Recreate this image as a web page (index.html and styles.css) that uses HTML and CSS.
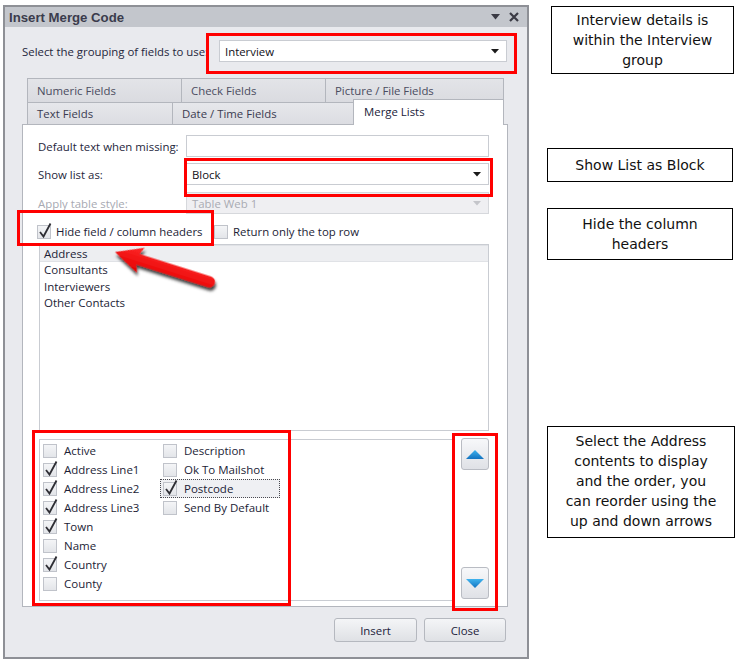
FILE: index.html
```html
<!DOCTYPE html>
<html>
<head>
<meta charset="utf-8">
<link rel="stylesheet" href="styles.css">
</head>
<body>
<div class="page">
  <div class="dialog">
    <div class="titlebar">
      <span class="title">Insert Merge Code</span>
      <span class="title-icons">
        <svg width="9" height="6" viewBox="0 0 9 6"><path d="M0 0H9L4.5 5.5Z" fill="#3a3a44"/></svg>
        <svg width="10" height="10" viewBox="0 0 10 10"><path d="M1 1L9 9M9 1L1 9" stroke="#3a3a44" stroke-width="2.2"/></svg>
      </span>
    </div>
    <div class="group-row">
      <span class="label">Select the grouping of fields to use:</span>
      <div class="combo group-combo"><span>Interview</span><svg class="drop" width="8" height="5" viewBox="0 0 8 5"><path d="M0 0H8L4 4.5Z" fill="#1a1a1a"/></svg></div>
    </div>
    <div class="tabs">
      <div class="tabrow row1">
        <div class="tab w-num">Numeric Fields</div>
        <div class="tab w-check">Check Fields</div>
        <div class="tab w-pic">Picture / File Fields</div>
      </div>
      <div class="tabrow row2">
        <div class="tab w-text">Text Fields</div>
        <div class="tab w-date">Date / Time Fields</div>
        <div class="tab active w-merge">Merge Lists</div>
      </div>
      <div class="panel">
        <div class="field-row">
          <span class="flabel">Default text when missing:</span>
          <div class="input"></div>
        </div>
        <div class="field-row r2">
          <span class="flabel">Show list as:</span>
          <div class="combo"><span>Block</span><svg class="drop" width="8" height="5" viewBox="0 0 8 5"><path d="M0 0H8L4 4.5Z" fill="#1a1a1a"/></svg></div>
        </div>
        <div class="field-row r3 disabled">
          <span class="flabel">Apply table style:</span>
          <div class="combo"><span>Table Web 1</span><svg class="drop" width="8" height="5" viewBox="0 0 8 5"><path d="M0 0H8L4 4.5Z" fill="#c4c5ca"/></svg></div>
        </div>
        <div class="check-row">
          <span class="cb on"><svg width="16" height="17" viewBox="0 0 16 17"><path d="M3 10L6.5 14.5L13.5 1.5" fill="none" stroke="#2e2e34" stroke-width="1.8"/></svg></span>
          <span class="cb-label hide-label">Hide field / column headers</span>
          <span class="cb"></span>
          <span class="cb-label">Return only the top row</span>
        </div>
        <div class="listbox">
          <div class="li sel">Address</div>
          <div class="li">Consultants</div>
          <div class="li">Interviewers</div>
          <div class="li">Other Contacts</div>
        </div>
        <div class="bottom">
          <div class="checklist">
            <div class="col c1">
              <div class="item"><span class="cb"></span><span>Active</span></div>
              <div class="item"><span class="cb on"><svg width="16" height="17" viewBox="0 0 16 17"><path d="M3 10L6.5 14.5L13.5 1.5" fill="none" stroke="#2e2e34" stroke-width="1.8"/></svg></span><span>Address Line1</span></div>
              <div class="item"><span class="cb on"><svg width="16" height="17" viewBox="0 0 16 17"><path d="M3 10L6.5 14.5L13.5 1.5" fill="none" stroke="#2e2e34" stroke-width="1.8"/></svg></span><span>Address Line2</span></div>
              <div class="item"><span class="cb on"><svg width="16" height="17" viewBox="0 0 16 17"><path d="M3 10L6.5 14.5L13.5 1.5" fill="none" stroke="#2e2e34" stroke-width="1.8"/></svg></span><span>Address Line3</span></div>
              <div class="item"><span class="cb on"><svg width="16" height="17" viewBox="0 0 16 17"><path d="M3 10L6.5 14.5L13.5 1.5" fill="none" stroke="#2e2e34" stroke-width="1.8"/></svg></span><span>Town</span></div>
              <div class="item"><span class="cb"></span><span>Name</span></div>
              <div class="item"><span class="cb on"><svg width="16" height="17" viewBox="0 0 16 17"><path d="M3 10L6.5 14.5L13.5 1.5" fill="none" stroke="#2e2e34" stroke-width="1.8"/></svg></span><span>Country</span></div>
              <div class="item"><span class="cb"></span><span>County</span></div>
            </div>
            <div class="col c2">
              <div class="item"><span class="cb"></span><span>Description</span></div>
              <div class="item"><span class="cb"></span><span>Ok To Mailshot</span></div>
              <div class="item focus"><span class="cb on"><svg width="16" height="17" viewBox="0 0 16 17"><path d="M3 10L6.5 14.5L13.5 1.5" fill="none" stroke="#2e2e34" stroke-width="1.8"/></svg></span><span>Postcode</span></div>
              <div class="item"><span class="cb"></span><span>Send By Default</span></div>
            </div>
          </div>
          <div class="movers">
            <div class="mbtn"><svg width="18" height="9" viewBox="0 0 18 9"><defs><linearGradient id="gu" x1="0" y1="0" x2="0" y2="1"><stop offset="0" stop-color="#3fb3ee"/><stop offset="1" stop-color="#1373c0"/></linearGradient></defs><path d="M0 9L9 0L18 9Z" fill="url(#gu)"/></svg></div>
            <div class="mbtn"><svg width="18" height="9" viewBox="0 0 18 9"><defs><linearGradient id="gd" x1="0" y1="0" x2="0" y2="1"><stop offset="0" stop-color="#3fb3ee"/><stop offset="1" stop-color="#1373c0"/></linearGradient></defs><path d="M0 0H18L9 9Z" fill="url(#gd)"/></svg></div>
          </div>
        </div>
      </div>
    </div>
    <div class="footer">
      <div class="btn b-insert">Insert</div>
      <div class="btn b-close">Close</div>
    </div>
  </div>

  <div class="notes">
    <div class="note n1">Interview details is<br>within the Interview<br>group</div>
    <div class="note n2">Show List as Block</div>
    <div class="note n3">Hide the column<br>headers</div>
    <div class="note n4">Select the Address<br>contents to display<br>and the order, you<br>can reorder using the<br>up and down arrows</div>
  </div>
</div>

<div class="mark m1"></div>
<div class="mark m2"></div>
<div class="mark m3"></div>
<div class="mark m4"></div>
<div class="mark m5"></div>

<svg class="arrow" width="738" height="666" viewBox="0 0 738 666">
  <defs>
    <filter id="sh" x="-20%" y="-50%" width="140%" height="200%">
      <feDropShadow dx="2" dy="3" stdDeviation="1.8" flood-color="#000" flood-opacity="0.75"/>
    </filter>
    <linearGradient id="ag" x1="0" y1="0" x2="0" y2="1">
      <stop offset="0" stop-color="#ff2a2a"/>
      <stop offset="1" stop-color="#e40000"/>
    </linearGradient>
  </defs>
  <g transform="translate(115 252) rotate(17.5)" filter="url(#sh)">
    <path d="M0 0L27 -13L24 -5.5L99 -5.5A5.5 5.5 0 0 1 99 5.5L24 5.5L27 13Z" fill="url(#ag)"/>
  </g>
</svg>
</body>
</html>
```

FILE: styles.css
```css
html, body {
  margin: 0;
  padding: 0;
  background: #ffffff;
}
body {
  position: relative;
  width: 738px;
  height: 666px;
  overflow: hidden;
  font-family: "Open Sans", "Noto Sans", sans-serif;
  font-size: 11.4px;
  color: #25263c;
}
.page {
  display: flex;
  align-items: flex-start;
}

/* dialog */
.dialog {
  box-sizing: border-box;
  width: 526px;
  height: 654px;
  margin: 5px 0 0 3px;
  border: 2px solid #8e9096;
  background: #e9eaee;
  display: flex;
  flex-direction: column;
}
.titlebar {
  height: 20px;
  background: #c3c6cc;
  display: flex;
  align-items: center;
  justify-content: space-between;
  padding: 0 8px 0 4px;
  flex: none;
}
.title {
  font-family: "Liberation Sans", Arial, sans-serif;
  font-weight: bold;
  font-size: 13.2px;
  color: #3b3c4c;
}
.title-icons {
  display: flex;
  align-items: center;
  gap: 9px;
}
.group-row {
  display: flex;
  align-items: center;
  margin-top: 13px;
  padding-left: 17px;
  padding-right: 20px;
  height: 22px;
}
.group-row .label {
  flex: 1;
}
.combo, .input {
  box-sizing: border-box;
  height: 22px;
  border: 1px solid #c9ccd2;
  background: #ffffff;
  display: flex;
  align-items: center;
  padding: 0 7px 0 5px;
  color: #101018;
}
.combo span {
  flex: 1;
}
.group-combo {
  width: 288px;
  flex: none;
}

/* tabs */
.tabs {
  margin: 16px 0 0 17px;
  width: 486px;
}
.tabrow {
  display: flex;
  padding-left: 5px;
}
.tab {
  box-sizing: border-box;
  border: 1px solid #b3b6bd;
  border-bottom: none;
  margin-right: -1px;
  padding-left: 9px;
  display: flex;
  align-items: center;
  color: #4a4c60;
}
.row1 .tab {
  height: 24px;
  background: linear-gradient(#e3e4e8, #dadbe0);
}
.row2 .tab {
  height: 22px;
  background: linear-gradient(#e6e7eb, #dcdde2);
  color: #3a3b50;
}
.row2 .tab.active {
  height: 26px;
  margin-top: -3px;
  margin-bottom: -1px;
  background: #ffffff;
  padding-left: 10px;
  padding-bottom: 3px;
  color: #20213a;
  position: relative;
  z-index: 1;
}
.w-num { width: 155px; }
.w-check { width: 145px; }
.w-pic { width: 179px; }
.w-text { width: 146px; }
.w-date { width: 182px; }
.w-merge { width: 151px; }

.panel {
  box-sizing: border-box;
  height: 483px;
  background: #ffffff;
  border: 1px solid #b3b6bd;
  padding-top: 10px;
}
.field-row {
  display: flex;
  align-items: center;
  padding-left: 15px;
  height: 22px;
}
.field-row.r2 { margin-top: 6px; }
.field-row.r3 { margin-top: 7px; }
.flabel {
  width: 148px;
}
.field-row .input, .field-row .combo {
  width: 303px;
}
.disabled .flabel {
  color: #a7a9b2;
}
.disabled .combo {
  background: #efeff2;
  border-color: #d6d8dc;
  color: #a9abb3;
}
.check-row {
  display: flex;
  align-items: center;
  margin-top: 10px;
  padding-left: 14px;
  height: 15px;
}
.cb {
  box-sizing: border-box;
  width: 14px;
  height: 14px;
  border: 1px solid #c0c3ca;
  background: linear-gradient(#f4f5f7, #e3e5e9);
  position: relative;
  flex: none;
}
.cb svg {
  position: absolute;
  left: -1px;
  top: -4px;
}
.cb-label {
  margin-left: 5px;
  color: #1c1d36;
}
.hide-label {
  width: 158px;
}
.listbox {
  box-sizing: border-box;
  margin: 5px 0 0 16px;
  width: 450px;
  height: 187px;
  border: 1px solid #c9ccd2;
  padding-top: 1px;
}
.li {
  height: 16.5px;
  line-height: 16.5px;
  padding-left: 4px;
  font-size: 11.5px;
  color: #1c1d36;
}
.li.sel {
  background: #edeef1;
  border-top: 1px solid #e0e2e6;
  border-bottom: 1px solid #e0e2e6;
  height: 15px;
  line-height: 15px;
  margin-top: -1px;
}
.bottom {
  display: flex;
  margin: 8px 0 0 16px;
}
.checklist {
  box-sizing: border-box;
  width: 416px;
  height: 162px;
  border: 1px solid #c9ccd2;
  display: flex;
  padding-top: 1px;
}
.col {
  width: 120px;
}
.item {
  box-sizing: border-box;
  height: 19px;
  display: flex;
  align-items: center;
  gap: 7px;
  padding-left: 2px;
  border: 1px solid transparent;
  font-size: 11.5px;
  color: #1c1d36;
}
.item.focus {
  border: 1px dotted #4a4a50;
  background: #eff0f3;
}
.movers {
  margin-left: 6px;
  margin-top: -1px;
  height: 161px;
  display: flex;
  flex-direction: column;
  justify-content: space-between;
}
.mbtn {
  box-sizing: border-box;
  width: 28px;
  height: 32px;
  border: 1px solid #b9bcc3;
  border-radius: 3px;
  background: linear-gradient(#f7f8fa, #dfe1e6);
  display: flex;
  align-items: center;
  justify-content: center;
}
.footer {
  display: flex;
  justify-content: flex-end;
  gap: 7px;
  margin-top: 11px;
  padding-right: 21px;
}
.btn {
  box-sizing: border-box;
  height: 24px;
  border: 1px solid #b5b8bf;
  border-radius: 3px;
  background: linear-gradient(#f4f5f7, #dfe1e5);
  display: flex;
  align-items: center;
  justify-content: center;
  color: #20213a;
}
.b-insert { width: 83px; }
.b-close { width: 82px; }

/* callouts */
.notes {
  margin-left: 18px;
  display: flex;
  flex-direction: column;
  align-items: flex-start;
}
.note {
  box-sizing: border-box;
  width: 186px;
  border: 1px solid #000000;
  text-align: center;
  font-family: "DejaVu Sans", sans-serif;
  font-size: 14px;
  line-height: 20px;
  color: #111111;
}
.n1 { margin: 6px 0 0 4px; width: 183px; padding: 3px 0; }
.n2 { margin-top: 74px; padding: 6px 0; }
.n3 { margin-top: 26px; padding: 5px 0; }
.n4 { margin-top: 166px; padding: 4px 0 6px; width: 188px; }

/* red annotation overlays */
.mark {
  position: absolute;
  box-sizing: border-box;
  border: 3px solid #ff0000;
}
.m1 { left: 206px; top: 33px; width: 311px; height: 41px; }
.m2 { left: 184px; top: 158px; width: 309px; height: 39px; }
.m3 { left: 17px; top: 210px; width: 197px; height: 36px; }
.m4 { left: 32px; top: 430px; width: 259px; height: 176px; }
.m5 { left: 452px; top: 433px; width: 46px; height: 178px; }
.arrow {
  position: absolute;
  left: 0;
  top: 0;
  pointer-events: none;
}
```
